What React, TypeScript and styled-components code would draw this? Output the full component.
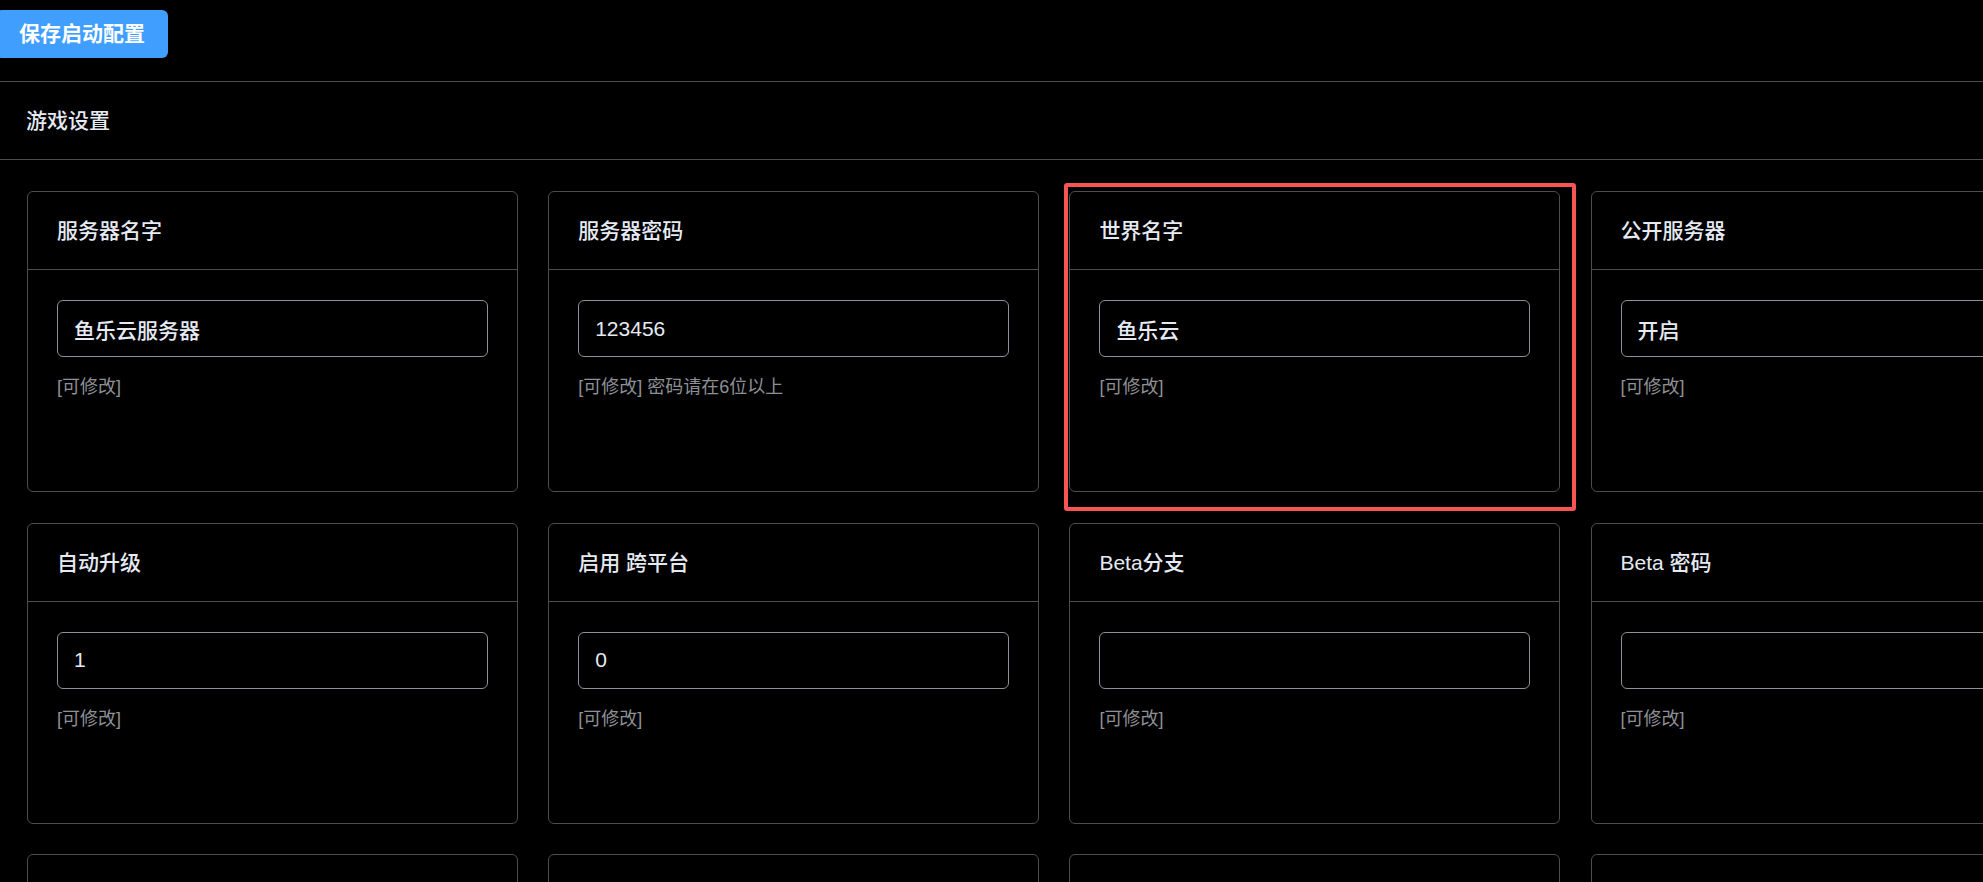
import React from "react";
import styled, { createGlobalStyle } from "styled-components";

const GlobalStyle = createGlobalStyle`
  html, body {
    margin: 0;
    padding: 0;
    background: #000;
    overflow: hidden;
  }
  body {
    font-family: "Liberation Sans", "Noto Sans CJK SC", sans-serif;
    color: #e5eaf3;
  }
  * { box-sizing: border-box; }
`;

const Page = styled.div`
  width: 2140px;
  margin-left: -4px;
  padding-top: 10px;
`;

const SaveButton = styled.button`
  height: 48px;
  padding: 0 23px;
  margin: 0;
  border: none;
  border-radius: 6px;
  background: #409eff;
  color: #fff;
  font-family: "Liberation Sans", "Noto Sans CJK SC", sans-serif;
  font-size: 21px;
  font-weight: 700;
  line-height: 48px;
  cursor: pointer;
`;

const Section = styled.section`
  margin-top: 23px;
  border-top: 1px solid #4c4d4f;
`;

const SectionHeader = styled.div`
  padding: 27px 30px;
  border-bottom: 1px solid #4c4d4f;
  font-size: 21px;
  font-weight: 500;
  line-height: 23px;
  color: #e5eaf3;
`;

const SectionBody = styled.div`
  padding: 31px 30px 30px 31px;
`;

const Grid = styled.div`
  display: grid;
  grid-template-columns: repeat(4, 490.7px);
  column-gap: 30.5px;
  row-gap: 30.5px;
`;

const CardWrap = styled.div`
  position: relative;
`;

const Card = styled.div`
  height: 301px;
  border: 1px solid #4c4d4f;
  border-radius: 6px;
  background: #000;
  display: flex;
  flex-direction: column;
  overflow: hidden;
`;

const CardHeader = styled.div`
  height: 78px;
  padding: 27px 29px;
  border-bottom: 1px solid #4c4d4f;
  font-size: 21px;
  font-weight: 500;
  line-height: 23px;
  color: #e5eaf3;
  white-space: pre;
`;

const CardBody = styled.div`
  padding: 30px 29px;
`;

const TextInput = styled.input`
  display: block;
  width: 100%;
  height: 57px;
  padding: 0 16px;
  border: 1px solid #8d9095;
  border-radius: 6px;
  background: transparent;
  color: #e5eaf3;
  font-family: "Liberation Sans", "Noto Sans CJK SC", sans-serif;
  font-size: 21px;
  font-weight: 500;
  outline: none;
`;

const Hint = styled.div`
  margin-top: 17px;
  font-size: 18px;
  line-height: 27px;
  color: #8d9095;
`;

const Highlight = styled.div`
  position: absolute;
  top: -8px;
  left: -5px;
  right: -16px;
  bottom: -19px;
  border: 4px solid #f75454;
  border-radius: 3px;
  pointer-events: none;
`;

type Field = {
  title: string;
  value: string;
  hint?: string;
  highlight?: boolean;
};

const fields: Field[] = [
  { title: "服务器名字", value: "鱼乐云服务器", hint: "[可修改]" },
  { title: "服务器密码", value: "123456", hint: "[可修改] 密码请在6位以上" },
  { title: "世界名字", value: "鱼乐云", hint: "[可修改]", highlight: true },
  { title: "公开服务器", value: "开启", hint: "[可修改]" },
  { title: "自动升级", value: "1", hint: "[可修改]" },
  { title: "启用 跨平台", value: "0", hint: "[可修改]" },
  { title: "Beta分支", value: "", hint: "[可修改]" },
  { title: "Beta 密码", value: "", hint: "[可修改]" },
  { title: "", value: "" },
  { title: "", value: "" },
  { title: "", value: "" },
  { title: "", value: "" },
];

function SettingCard({ field }: { field: Field }) {
  return (
    <CardWrap>
      <Card>
        <CardHeader>{field.title}</CardHeader>
        <CardBody>
          <TextInput defaultValue={field.value} />
          {field.hint && <Hint>{field.hint}</Hint>}
        </CardBody>
      </Card>
      {field.highlight && <Highlight />}
    </CardWrap>
  );
}

export default function App() {
  return (
    <>
      <GlobalStyle />
      <Page>
        <SaveButton>保存启动配置</SaveButton>
        <Section>
          <SectionHeader>游戏设置</SectionHeader>
          <SectionBody>
            <Grid>
              {fields.map((f, i) => (
                <SettingCard key={i} field={f} />
              ))}
            </Grid>
          </SectionBody>
        </Section>
      </Page>
    </>
  );
}
